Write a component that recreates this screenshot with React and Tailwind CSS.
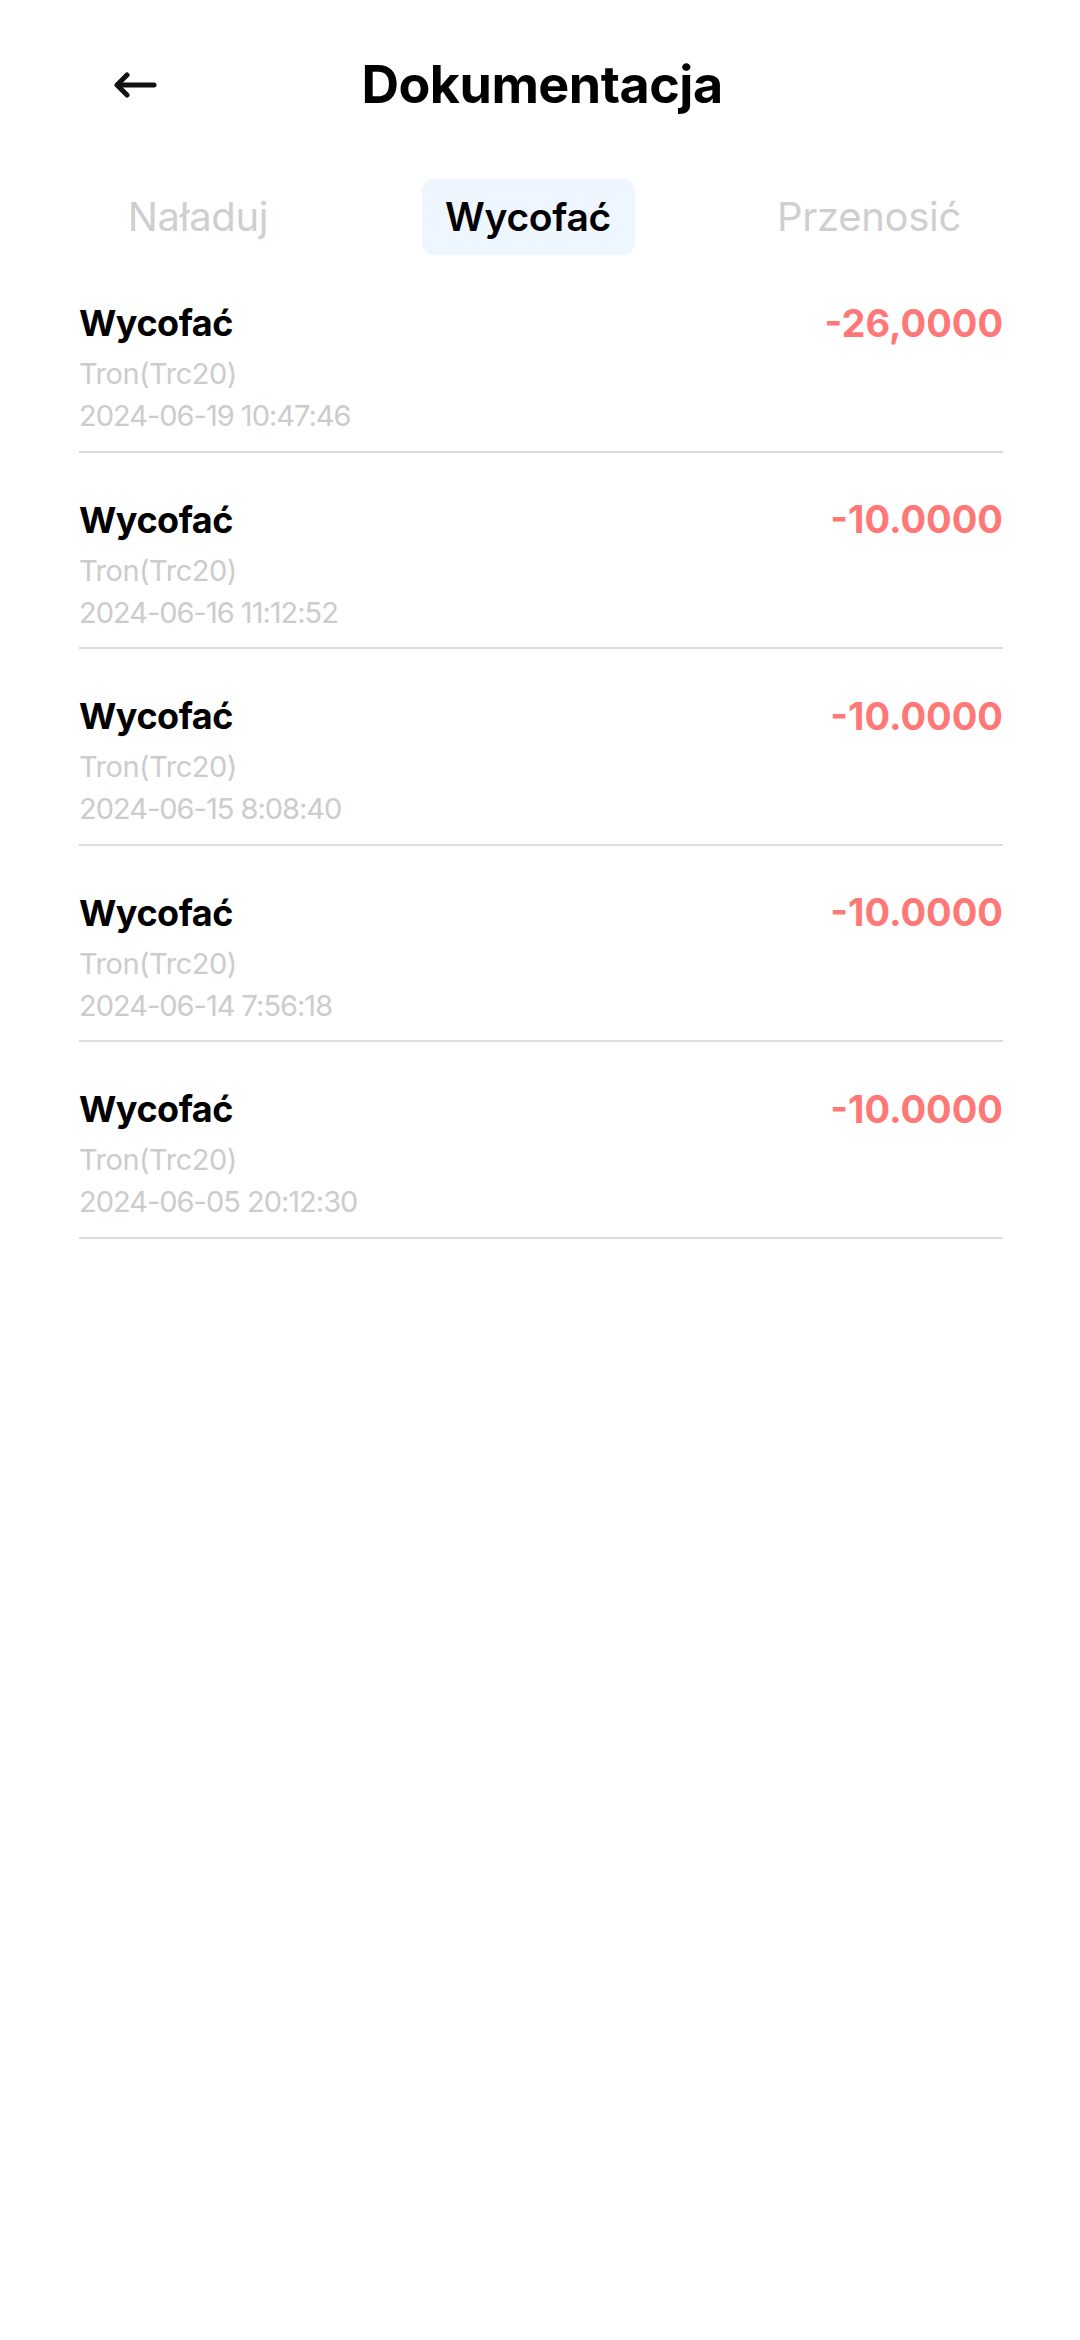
import React from 'react';

const records = [
  { amount: '-26,0000', time: '2024-06-19 10:47:46' },
  { amount: '-10.0000', time: '2024-06-16 11:12:52' },
  { amount: '-10.0000', time: '2024-06-15 8:08:40' },
  { amount: '-10.0000', time: '2024-06-14 7:56:18' },
  { amount: '-10.0000', time: '2024-06-05 20:12:30' },
];

const tabs = [
  { label: 'Naładuj', width: 'w-[200px]' },
  { label: 'Wycofać', width: 'w-[213px]' },
  { label: 'Przenosić', width: 'w-[222px]' },
];

function Header() {
  return (
    <header className="relative h-[170px] flex items-center justify-center pl-[4px]">
      {/* back arrow */}
      <button className="absolute left-[110px] top-[68px] w-[50px] h-[34px] flex items-center justify-center">
        <svg viewBox="0 0 44 26" className="w-[44px] h-[26px]" fill="none" stroke="#111" strokeWidth="5" strokeLinecap="round" strokeLinejoin="round">
          <path d="M41 13H5" />
          <path d="M14 3L4 13l10 10" />
        </svg>
      </button>
      <h1 className="text-[52px] font-bold text-black tracking-[-0.5px]">Dokumentacja</h1>
    </header>
  );
}

function Tabs({ active }) {
  return (
    <nav className="flex justify-between pl-[98px] pr-[100px] h-[76px] mt-[9px]">
      {tabs.map((t) => (
        <div
          key={t.label}
          className={
            t.label === active
              ? `${t.width} h-full flex items-center justify-center rounded-[12px] bg-[#eef6ff] text-black font-semibold text-[39px] tracking-[-0.3px]`
              : `${t.width} h-full flex items-center justify-center text-[#cfcfcf] font-normal text-[40px] tracking-[-0.3px]`
          }
        >
          {t.label}
        </div>
      ))}
    </nav>
  );
}

function Row({ amount, time }) {
  return (
    <div className="ml-[79px] mr-[77px] pt-[42px] pb-[13.5px] border-b-2 border-[#dcdcdc]">
      <div className="flex justify-between items-center h-[50px]">
        <span className="text-[36px] font-bold text-black tracking-[-0.5px]">Wycofać</span>
        <span className="text-[38px] font-bold text-[#ff7878]">{amount}</span>
      </div>
      <div className="mt-[5px] h-[42px] leading-[42px] text-[29px] tracking-[-0.5px] text-[#cccccc]">Tron(Trc20)</div>
      <div className="h-[42px] leading-[42px] text-[29px] tracking-[-1px] text-[#cccccc]">{time}</div>
    </div>
  );
}

export default function App() {
  return (
    <div className="w-[1080px] min-h-[2340px] bg-white font-['Inter',sans-serif]">
      <Header />
      <Tabs active="Wycofać" />
      <div className="pt-[1px]">
        {records.map((r, i) => (
          <Row key={i} {...r} />
        ))}
      </div>
    </div>
  );
}
